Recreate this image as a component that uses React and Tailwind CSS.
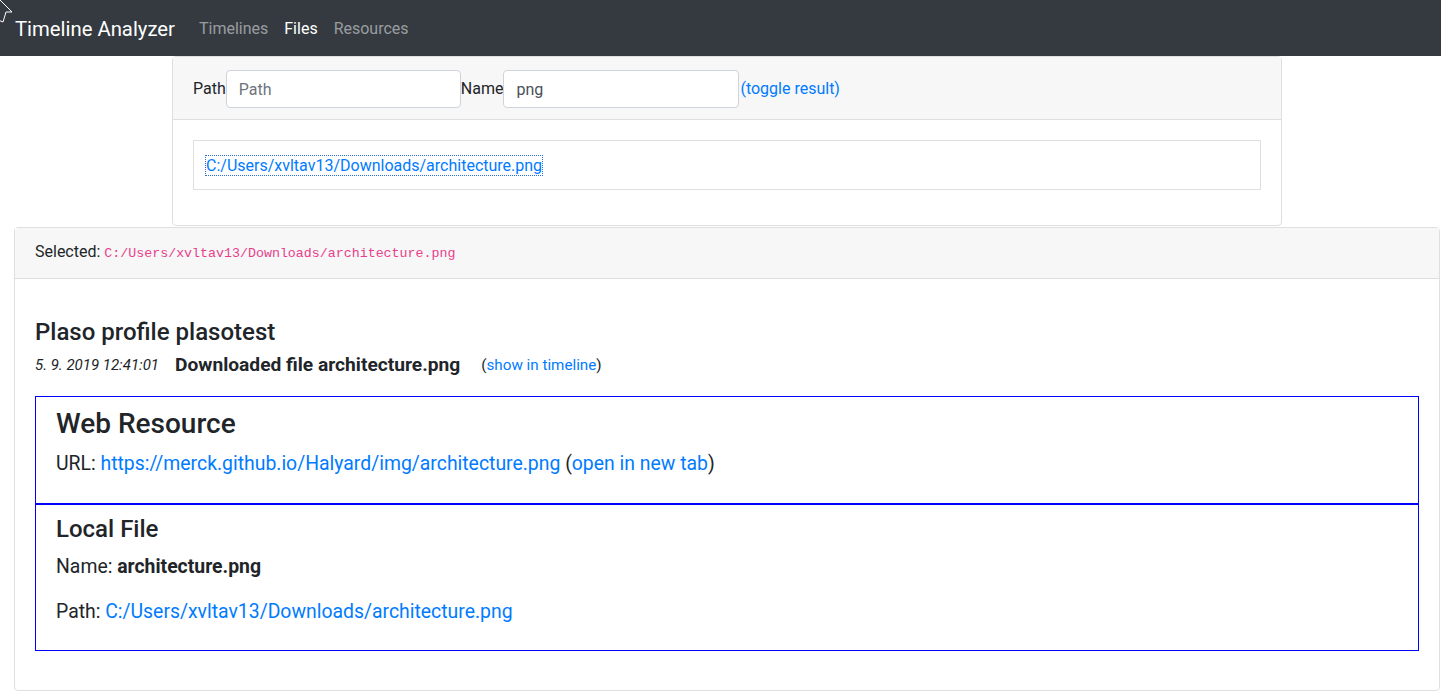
export default function App() {
  return (
    <div className="relative min-h-[696px] bg-white text-[#212529] text-[16px] leading-6" style={{ fontFamily: 'Roboto, "Liberation Sans", sans-serif' }}>
      <svg className="absolute left-0 top-0 z-10" width="14" height="24" viewBox="0 0 14 24">
        <path d="M-2 -2 L12 12 L6 12 L3 22 L-2 20 Z" fill="#343a40" stroke="#ffffff" strokeWidth="1" />
      </svg>
      <nav className="h-14 bg-[#343a40] flex items-center pl-[15px] pt-px">
        <span className="text-white text-[20.3px] leading-[30px] mr-4">Timeline Analyzer</span>
        <a className="px-2 text-white/50">Timelines</a>
        <a className="px-2 text-white">Files</a>
        <a className="px-2 text-white/50">Resources</a>
      </nav>

      <div className="ml-[172px] w-[1110px] border border-[#dfdfdf] rounded-[4px]">
        <div className="bg-[#f7f7f7] border-b border-[#dfdfdf] px-5 pt-[13px] pb-[11px] flex items-center">
          <label>Path</label>
          <input className="w-[235px] h-[38px] border border-[#ced4da] rounded-[4px] px-3 bg-white text-[#495057] placeholder:text-[#6c757d] outline-none" placeholder="Path" />
          <label>Name</label>
          <input className="w-[236px] h-[38px] border border-[#ced4da] rounded-[4px] px-3 bg-white text-[#495057] outline-none" defaultValue="png" />
          <a className="text-[#007bff] ml-px">(toggle result)</a>
        </div>
        <div className="px-5 pt-5 pb-[35px]">
          <div className="border border-[#dfdfdf] px-3 pt-[13px] pb-[11px]">
            <a className="text-[#007bff] outline-1 outline-dotted outline-[#2a6fd6]">C:/Users/xvltav13/Downloads/architecture.png</a>
          </div>
        </div>
      </div>

      <div className="ml-[14px] w-[1426px] mt-px border border-[#dfdfdf] rounded-[4px]">
        <div className="bg-[#f7f7f7] border-b border-[#dfdfdf] px-5 py-3">
          Selected:{' '}
          <code className="text-[#e83e8c] text-[13.3px]" style={{ fontFamily: '"Liberation Mono", monospace' }}>C:/Users/xvltav13/Downloads/architecture.png</code>
        </div>
        <div className="px-5 pt-[39px] pb-[39px]">
          <h4 className="text-[24px] leading-[29px] font-medium mb-2">Plaso profile plasotest</h4>
          <div className="flex items-center h-[19px] mb-[22px]">
            <i className="text-[15px]">5. 9. 2019 12:41:01</i>
            <b className="ml-4 text-[19.2px] font-bold">Downloaded file architecture.png</b>
            <span className="ml-[21px] text-[15.2px]">
              (<a className="text-[#007bff]">show in timeline</a>)
            </span>
          </div>

          <div className="border border-[#0000ff] px-5 pt-[10px] pb-[9px] text-[19.4px] leading-[29px]">
            <h3 className="text-[28px] leading-[34px] font-medium mb-2">Web Resource</h3>
            <p className="mb-4">
              URL: <a className="text-[#007bff]">https://merck.github.io/Halyard/img/architecture.png</a> (
              <a className="text-[#007bff]">open in new tab</a>)
            </p>
          </div>
          <div className="border border-[#0000ff] px-5 pt-[10px] pb-[8px] text-[19.4px] leading-[29px]">
            <h4 className="text-[24px] leading-[29px] font-medium mb-2">Local File</h4>
            <p className="mb-4">
              Name: <b className="font-bold">architecture.png</b>
            </p>
            <p className="mb-4">
              Path: <a className="text-[#007bff]">C:/Users/xvltav13/Downloads/architecture.png</a>
            </p>
          </div>
        </div>
      </div>
    </div>
  );
}
